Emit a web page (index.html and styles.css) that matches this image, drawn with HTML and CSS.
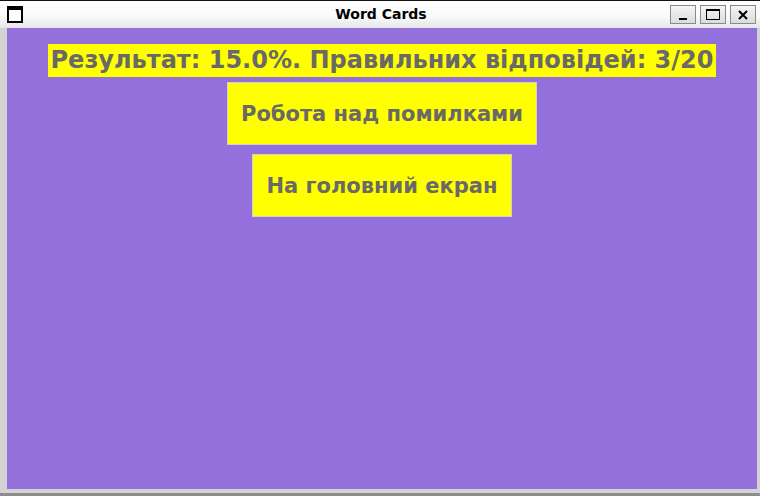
FILE: index.html
```html
<!DOCTYPE html>
<html>
<head>
<meta charset="utf-8">
<link rel="stylesheet" href="styles.css">
</head>
<body>
<div class="window">
  <div class="titlebar">
    <div class="app-icon"></div>
    <div class="title">Word Cards</div>
    <div class="controls">
      <div class="ctl"><span class="min-bar"></span></div>
      <div class="ctl"><span class="max-box"></span></div>
      <div class="ctl"><svg width="12" height="12" viewBox="0 0 12 12"><path d="M2 2 L10 10 M10 2 L2 10" stroke="#000" stroke-width="2"/></svg></div>
    </div>
  </div>
  <div class="frame">
    <div class="content">
      <div class="result">Результат: 15.0%. Правильних відповідей: 3/20</div>
      <button class="btn btn-first">Робота над помилками</button>
      <button class="btn btn-second">На головний екран</button>
    </div>
  </div>
</div>
</body>
</html>
```
FILE: styles.css
```css
html, body {
  margin: 0;
  padding: 0;
  width: 760px;
  height: 496px;
  overflow: hidden;
  background: #d3d3d3;
}
.window {
  width: 760px;
  height: 496px;
  display: flex;
  flex-direction: column;
  box-sizing: border-box;
  border-bottom: 3px solid #8e8e8e;
}
.titlebar {
  height: 28px;
  flex: none;
  box-sizing: border-box;
  border-top: 1px solid #111;
  background: linear-gradient(#ffffff 0%, #fafafa 55%, #e6e6e6 100%);
  display: flex;
  align-items: center;
  position: relative;
  font-family: "DejaVu Sans", sans-serif;
}
.app-icon {
  width: 12px;
  height: 11px;
  margin-left: 7px;
  border: 2px solid #000;
  border-top-width: 4px;
  background: #fff;
}
.title {
  position: absolute;
  left: 2px;
  right: 0;
  top: 5px;
  text-align: center;
  font-weight: bold;
  font-size: 14px;
  color: #000;
}
.controls {
  margin-left: auto;
  margin-right: 4px;
  display: flex;
  gap: 4px;
}
.ctl {
  width: 24px;
  height: 17px;
  border: 1px solid #8a8a8a;
  background: linear-gradient(#f4f4f4, #dcdcdc);
  display: flex;
  align-items: center;
  justify-content: center;
}
.min-bar {
  width: 8px;
  height: 2px;
  background: #000;
  margin-top: 8px;
}
.max-box {
  width: 12px;
  height: 8px;
  border: 1px solid #000;
  border-top-width: 2px;
}
.frame {
  flex: 1;
  padding: 0 3px 4px 7px;
  display: flex;
}
.content {
  flex: 1;
  background: #9370db;
  display: flex;
  flex-direction: column;
  align-items: center;
  font-family: "DejaVu Sans", sans-serif;
  font-weight: bold;
  color: #696969;
}
.result {
  margin-top: 16px;
  background: #ffff00;
  font-size: 24px;
  height: 33px;
  line-height: 33px;
  padding: 0 3px;
}
.btn {
  font-family: "DejaVu Sans", sans-serif;
  font-weight: bold;
  color: #696969;
  background: #ffff00;
  border: 1px solid #cfcfcf;
  font-size: 21px;
  padding: 0 13px;
  height: 63px;
}
.btn-first {
  margin-top: 5px;
}
.btn-second {
  margin-top: 9px;
}
```
